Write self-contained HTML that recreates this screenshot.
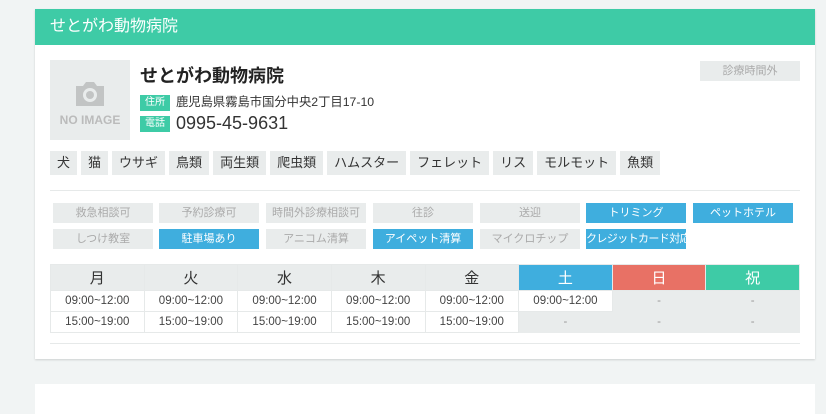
<!DOCTYPE html>
<html><head><meta charset="utf-8"><style>
*{box-sizing:border-box;margin:0;padding:0}
body{width:826px;height:404px;background:#f1f4f4;font-family:"Liberation Sans","Noto Sans CJK JP",sans-serif;position:relative;overflow:hidden;color:#333}
.card{position:absolute;left:35px;top:9px;width:780px;height:350px;background:#fff;box-shadow:0 1px 2px rgba(0,0,0,.15)}
.hd{height:36px;background:#3ecba6;color:#fff;font-size:16px;line-height:36px;padding-left:15px}
.img{position:absolute;left:15px;top:51px;width:80px;height:80px;background:#e9ecec;color:#bbb;font-size:12px;font-weight:bold;text-align:center}
.title{position:absolute;left:105px;top:53px;font-size:18px;font-weight:bold;color:#222}
.bd{display:inline-block;background:#3ecba6;color:#fff;font-size:10px;width:30px;height:16px;line-height:16px;text-align:center;vertical-align:middle;margin-right:6px}
.r1{position:absolute;left:105px;top:83px;font-size:12.3px}
.r2{position:absolute;left:105px;top:104px;font-size:18px}
.out{position:absolute;left:665px;top:52px;width:100px;height:20px;background:#e9ecec;color:#aaa;font-size:11px;text-align:center;line-height:20px}
.tags{position:absolute;left:15px;top:142px;font-size:13px;white-space:nowrap}
.tags span{display:inline-block;background:#e9ecec;height:24px;line-height:24px;padding:0 7px;margin-right:4px}
.hr{position:absolute;left:15px;width:750px;height:1px;background:#e6e9e9}
.f{position:absolute;width:100px;height:20px;line-height:20px;font-size:11px;text-align:center;background:#e9ecec;color:#aaa;white-space:nowrap;overflow:hidden}
.f.on{background:#3faede;color:#fff}
table{position:absolute;left:15px;top:255px;width:750px;border-collapse:collapse;table-layout:fixed}
th{height:26px;font-weight:normal;font-size:15px;background:#e9ecec;border:1px solid #e6e9e9}
td{height:21px;font-size:11.5px;text-align:center;border:1px solid #e6e9e9;color:#444}
td.x{background:#e9ecec;color:#999;border-color:#e9ecec}
.card2{position:absolute;left:35px;top:384px;width:780px;height:30px;background:#fff}
</style></head><body>
<div class="card">
<div class="hd">せとがわ動物病院</div>
<div class="img"><svg width="36" height="28" viewBox="0 0 36 28" style="margin-top:20px"><path d="M4 6h7l3-4h8l3 4h7v20H4z" fill="#c2c4c4"/><circle cx="18" cy="15" r="7" fill="#e9ecec"/><circle cx="18" cy="15" r="4" fill="#c2c4c4"/></svg><div style="margin-top:2px">NO IMAGE</div></div>
<div class="title">せとがわ動物病院</div>
<div class="r1"><span class="bd">住所</span>鹿児島県霧島市国分中央2丁目17-10</div>
<div class="r2"><span class="bd">電話</span>0995-45-9631</div>
<div class="out">診療時間外</div>
<div class="tags"><span>犬</span><span>猫</span><span>ウサギ</span><span>鳥類</span><span>両生類</span><span>爬虫類</span><span>ハムスター</span><span>フェレット</span><span>リス</span><span>モルモット</span><span>魚類</span></div>
<div class="hr" style="top:181px"></div>
<div class="f" style="left:18px;top:194px">救急相談可</div>
<div class="f" style="left:124px;top:194px">予約診療可</div>
<div class="f" style="left:231px;top:194px">時間外診療相談可</div>
<div class="f" style="left:338px;top:194px">往診</div>
<div class="f" style="left:445px;top:194px">送迎</div>
<div class="f on" style="left:551px;top:194px">トリミング</div>
<div class="f on" style="left:658px;top:194px">ペットホテル</div>
<div class="f" style="left:18px;top:220px">しつけ教室</div>
<div class="f on" style="left:124px;top:220px">駐車場あり</div>
<div class="f" style="left:231px;top:220px">アニコム清算</div>
<div class="f on" style="left:338px;top:220px">アイペット清算</div>
<div class="f" style="left:445px;top:220px">マイクロチップ</div>
<div class="f on" style="left:551px;top:220px;text-align:left;letter-spacing:-0.6px">クレジットカード対応</div>
<table>
<tr><th>月</th><th>火</th><th>水</th><th>木</th><th>金</th><th style="background:#3faede;color:#fff">土</th><th style="background:#e87165;color:#fff">日</th><th style="background:#3ecba6;color:#fff">祝</th></tr>
<tr><td>09:00~12:00</td><td>09:00~12:00</td><td>09:00~12:00</td><td>09:00~12:00</td><td>09:00~12:00</td><td>09:00~12:00</td><td class="x">-</td><td class="x">-</td></tr>
<tr><td>15:00~19:00</td><td>15:00~19:00</td><td>15:00~19:00</td><td>15:00~19:00</td><td>15:00~19:00</td><td class="x">-</td><td class="x">-</td><td class="x">-</td></tr>
</table>
<div class="hr" style="top:334px"></div>
</div>
<div class="card2"></div>
</body></html>
